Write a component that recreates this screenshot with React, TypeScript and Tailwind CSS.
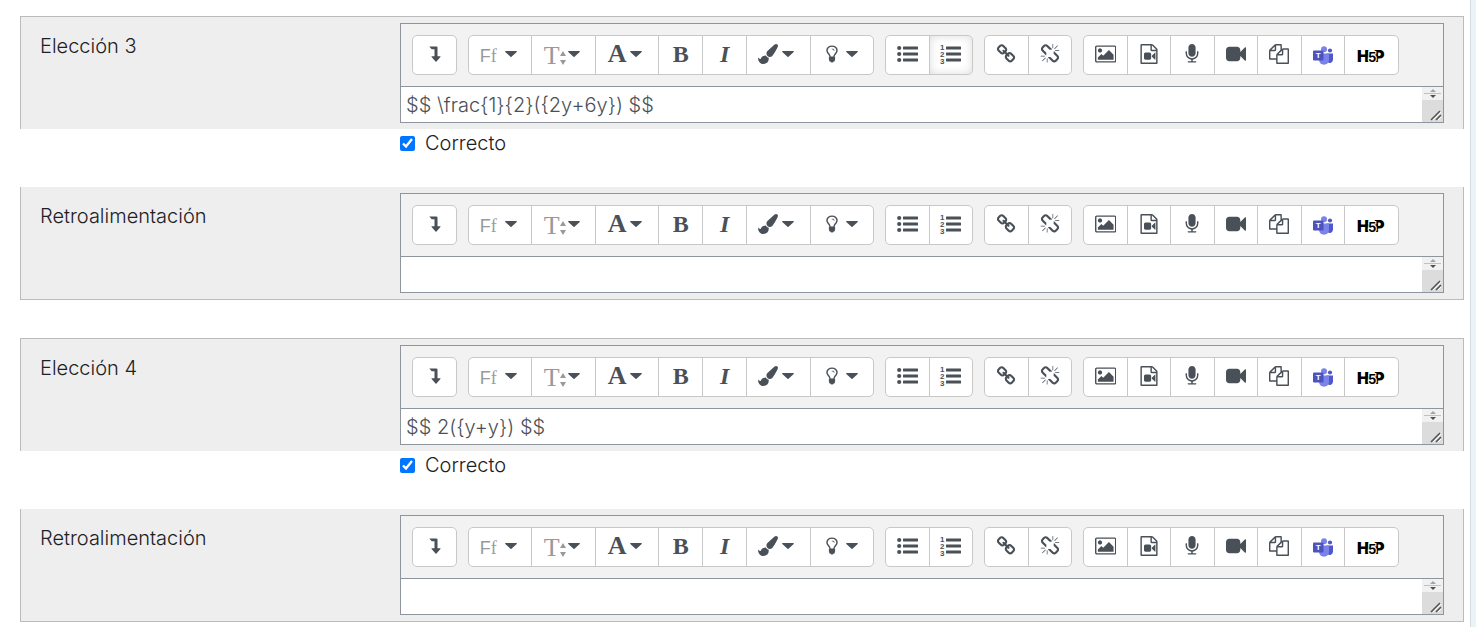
import type { ReactNode } from 'react'

const LINK =
  'M1520 1216q0-40-28-68l-208-208q-28-28-68-28-42 0-72 32 3 3 19 18.5t21.5 21.5 15 19 13 25.5 3.5 27.5q0 40-28 68t-68 28q-15 0-27.5-3.5t-25.5-13-19-15-21.5-21.5-18.5-19q-33 31-33 73 0 40 28 68l206 207q27 27 68 27 40 0 68-26l147-146q28-28 28-67zm-703-705q0-40-28-68l-206-207q-28-28-68-28-39 0-68 27l-147 146q-28 28-28 67 0 40 28 68l208 208q27 27 68 27 42 0 72-31-3-3-19-18.5t-21.5-21.5-15-19-13-25.5-3.5-27.5q0-40 28-68t68-28q15 0 27.5 3.5t25.5 13 19 15 21.5 21.5 18.5 19q33-31 33-73zm895 705q0 120-85 203l-147 146q-83 83-203 83-121 0-204-85l-206-207q-83-83-83-203 0-123 88-209l-88-88q-86 88-208 88-120 0-204-84l-208-208q-84-84-84-204t85-203l147-146q83-83 203-83 121 0 204 85l206 207q83 83 83 203 0 123-88 209l88 88q86-88 208-88 120 0 204 84l208 208q84 84 84 204z'
const UNLINK =
  'M503 1271l-256 256q-10 9-23 9-12 0-23-9-9-10-9-23t9-23l256-256q10-9 23-9t23 9q9 10 9 23t-9 23zm169 41v320q0 14-9 23t-23 9-23-9-9-23v-320q0-14 9-23t23-9 23 9 9 23zm-224-224q0 14-9 23t-23 9h-320q-14 0-23-9t-9-23 9-23 23-9h320q14 0 23 9t9 23zm1264 128q0 120-85 203l-147 146q-83 83-203 83-121 0-204-85l-334-335q-21-21-42-56l239-18 273 274q28 28 68 28t68-27l147-146q28-28 28-67 0-40-28-68l-274-275 18-239q35 21 56 42l336 336q84 86 84 204zm-617-724l-239 18-273-274q-28-28-68-28-39 0-68 27l-147 146q-28 28-28 67 0 40 28 68l274 274-18 240q-35-21-56-42l-336-336q-84-86-84-204 0-120 85-203l147-146q83-83 203-83 121 0 204 85l334 335q21 21 42 56zm633 84q0 14-9 23t-23 9h-320q-14 0-23-9t-9-23 9-23 23-9h320q14 0 23 9t9 23zm-544-544v320q0 14-9 23t-23 9-23-9-9-23v-320q0-14 9-23t23-9 23 9 9 23zm407 151l-256 256q-11 9-23 9t-23-9q-9-10-9-23t9-23l256-256q10-9 23-9t23 9q9 10 9 23t-9 23z'
const PICTURE =
  'M576 576q0 80-56 136t-136 56-136-56-56-136 56-136 136-56 136 56 56 136zm1024 384v448h-1408v-192l320-320 160 160 512-512zm96-704h-1600q-13 0-22.5 9.5t-9.5 22.5v1216q0 13 9.5 22.5t22.5 9.5h1600q13 0 22.5-9.5t9.5-22.5v-1216q0-13-9.5-22.5t-22.5-9.5zm160 32v1216q0 66-47 113t-113 47h-1600q-66 0-113-47t-47-113v-1216q0-66 47-113t113-47h1600q66 0 113 47t47 113z'
const MICROPHONE =
  'M1472 704v128q0 221-147.500 384.500t-364.500 187.500v132h256q26 0 45 19t19 45-19 45-45 19h-640q-26 0-45-19t-19-45 19-45 45-19h256v-132q-217-24-364.500-187.500t-147.500-384.500v-128q0-26 19-45t45-19 45 19 19 45v128q0 185 131.500 316.500t316.500 131.500 316.500-131.500 131.500-316.500v-128q0-26 19-45t45-19 45 19 19 45zm-256-384v512q0 132-94 226t-226 94-226-94-94-226v-512q0-132 94-226t226-94 226 94 94 226z'
const VIDEO =
  'M1792 352v1088q0 42-39 59-13 5-25 5-27 0-45-19l-403-403v166q0 119-84.500 203.500t-203.500 84.500h-704q-119 0-203.500-84.500t-84.500-203.500v-704q0-119 84.500-203.500t203.500-84.500h704q119 0 203.500 84.500t84.500 203.500v165l403-402q18-19 45-19 12 0 25 5 39 17 39 59z'
const FILE_VIDEO =
  'M1596 380q28 28 48 76t20 88v1152q0 40-28 68t-68 28h-1344q-40 0-68-28t-28-68v-1600q0-40 28-68t68-28h896q40 0 88 20t76 48zm-444-244v376h376q-10-29-22-41l-313-313q-12-12-41-22zm384 1528v-1024h-416q-40 0-68-28t-28-68v-416h-768v1536h1280zm-576-896q52 0 90 38t38 90v384q0 52-38 90t-90 38h-384q-52 0-90-38t-38-90v-384q0-52 38-90t90-38h384zm492 2q20 8 20 30v576q0 22-20 30-8 2-12 2-14 0-23-9l-265-266v-90l265-266q9-9 23-9 4 0 12 2z'
const FILES =
  'M1696 384q40 0 68 28t28 68v1216q0 40-28 68t-68 28h-960q-40 0-68-28t-28-68v-288h-544q-40 0-68-28t-28-68v-672q0-40 20-88t48-76l408-408q28-28 76-48t88-20h416q40 0 68 28t28 68v328q68-40 128-40h416zm-544 213l-299 299h299v-299zm-640-384l-299 299h299v-299zm196 647l316-316v-416h-384v416q0 40-28 68t-68 28h-416v640h512v-256q0-40 20-88t48-76zm956 804v-1152h-384v416q0 40-28 68t-68 28h-416v640h896z'
const BULB =
  'M1120 576q0 13-9.500 22.500t-22.500 9.500-22.500-9.500-9.500-22.500q0-46-54-71t-106-25q-13 0-22.500-9.500t-9.500-22.500 9.500-22.500 22.500-9.500q50 0 99.500 16t87 54 37.500 90zm160 0q0-72-34.500-134t-90-101.500-123-62-136.500-22.500-136.500 22.500-123 62-90 101.500-34.500 134q0 101 68 180 10 11 30.500 33t30.500 33q128 153 141 298h228q13-145 141-298 10-11 30.500-33t30.500-33q68-79 68-180zm128 0q0 155-103 268-45 49-74.500 87t-59.500 95.500-34 107.500q47 28 47 82 0 37-25 64 25 27 25 64 0 52-45 81 13 23 13 47 0 46-31.500 71t-77.500 25q-20 44-60 70t-87 26-87-26-60-70q-46 0-77.500-25t-31.500-71q0-24 13-47-45-29-45-81 0-37 25-64-25-27-25-64 0-54 47-82-4-50-34-107.500t-59.500-95.500-74.500-87q-103-113-103-268 0-99 44.500-184.500t117-142 164-89 186.500-32.500 186.500 32.500 164 89 117 142 44.500 184.500z'
const BRUSH =
  'M1615 0q70 0 122.5 46.500t52.500 116.500q0 63-45 151-332 629-465 752-97 91-218 91-126 0-216.500-92.500t-90.500-219.500q0-128 92-212l638-579q59-54 130-54zm-909 1034q39 76 106.500 130t150.500 76l1 71q4 213-129.500 347t-348.500 134q-123 0-218-46.500t-152.500-127.500-86.500-183-29-220q7 5 41 30t62 44.500 59 36.500 46 17q41 0 55-37 25-66 57.500-112.500t69.500-76 88-47.500 103-25.500 125-10.500z'

function Glyph({ d, viewBox = '0 0 1792 1792' }: { d: string; viewBox?: string }) {
  return (
    <svg viewBox={viewBox} className="h-5 shrink-0 fill-current" aria-hidden="true">
      <path d={d} />
    </svg>
  )
}

function Caret() {
  return (
    <svg viewBox="0 0 12 6" className="h-[6px] w-3 shrink-0 fill-current" aria-hidden="true">
      <path d="M.6 0h10.800q.8.200.3.900L6.500 5.700q-.5.400-1 0L.3.900Q-.2.200.6 0z" />
    </svg>
  )
}

function LevelDown() {
  return (
    <svg viewBox="0 0 12 16" className="h-4 w-3 fill-current" aria-hidden="true">
      <path d="M.3.400h7.200q1 0 1 1v8.800h2.600q.8.200.3.900L7.500 15.500q-.5.400-1 0L2.600 11.100q-.5-.8.300-.9h2.600V3.200H2.700z" />
    </svg>
  )
}

function BulletList() {
  return (
    <svg viewBox="0 0 21 18" className="h-[18px] w-[21px] fill-current" aria-hidden="true">
      {[3, 9, 15].map(y => (
        <g key={y}>
          <circle cx="2.200" cy={y} r="2.100" />
          <rect x="6" y={y - 1.400} width="15" height="2.800" rx=".5" />
        </g>
      ))}
    </svg>
  )
}

function NumberList() {
  return (
    <svg viewBox="0 0 21 28" className="h-7 w-[21px] fill-current" aria-hidden="true">
      {[1, 2, 3].map(n => (
        <g key={n}>
          <text x="0" y={n * 7 + 3} className="font-['Liberation_Sans'] text-[8px] font-bold">{n}</text>
          <rect x="6" y={n * 6 + 0.600} width="15" height="2.800" rx=".5" />
        </g>
      ))}
    </svg>
  )
}

function Teams() {
  return (
    <svg viewBox="0 0 20 19" className="mt-[2px] h-[19px] w-5" aria-hidden="true">
      <circle cx="17" cy="4.500" r="2.100" fill="#5059c9" />
      <path d="M13.500 7.500H20v6a3.400 3.400 0 0 1-5 3z" fill="#5059c9" />
      <circle cx="11" cy="3.200" r="3" fill="#7b83eb" />
      <path d="M6 7.500h10v6.200a5 5 0 0 1-10 0z" fill="#7b83eb" />
      <rect y="4.500" width="10.500" height="10" rx="1" fill="#4b53bc" />
      <text x="5.200" y="12.400" textAnchor="middle" fill="#fff" className="font-['Liberation_Sans'] text-[8px] font-bold">T</text>
    </svg>
  )
}

function H5P() {
  return (
    <svg viewBox="0 0 34 28" className="h-7 w-[34px]" aria-hidden="true">
      <g className="font-['Inter'] text-[16px] font-black">
        <text x="2" y="22">H</text>
        <text x="19" y="22">P</text>
        <rect x="11" y="14.500" width="12" height="3" />
        <text x="13" y="22" stroke="#fff" strokeWidth="2" paintOrder="stroke" className="text-[13px] font-bold">5</text>
      </g>
    </svg>
  )
}

function Group({ className = '', children }: { className?: string; children: ReactNode }) {
  return (
    <div className={`flex h-10 shrink-0 divide-x divide-[#c8c8c8] rounded-[5px] border border-[#c8c8c8] bg-white ${className}`}>
      {children}
    </div>
  )
}

interface ToolProps {
  label: string
  className?: string
  pressed?: boolean
  children: ReactNode
}

function Tool({ label, className = 'flex-1', pressed, children }: ToolProps) {
  return (
    <button
      type="button"
      title={label}
      aria-label={label}
      aria-pressed={pressed}
      className={`flex items-center justify-center gap-1 pb-[2px] text-[#495057] ${pressed ? 'rounded-r-[4px] shadow-[inset_0_0_10px_#dcdcdc]' : ''} ${className}`}
    >
      {children}
    </button>
  )
}

function Toolbar({ numbered }: { numbered?: boolean }) {
  return (
    <div className="flex flex-wrap gap-[11px] border-b border-[#8f959e] bg-[#f2f2f2] p-[11px]">
      <Group className="w-[45px]">
        <Tool label="Mostrar más botones"><LevelDown /></Tool>
      </Group>
      <Group className="w-[406px]">
        <Tool label="Familia de fuente" className="flex-1 pr-1">
          <span className="mt-1 mr-1 text-lg leading-5 text-[#999]">
            <span className="font-['Liberation_Sans']">F</span>
            <span className="font-['Liberation_Serif']">f</span>
          </span>
          <Caret />
        </Tool>
        <Tool label="Tamaño de fuente" className="flex-1 pr-1">
          <span className="mt-1 -mr-[2px] flex items-center text-[#999]">
            <span className="font-['Liberation_Serif'] text-[26px] leading-5">T</span>
            <svg viewBox="0 0 6 14" className="mt-1 h-[14px] w-[6px] fill-current" aria-hidden="true">
              <path d="M3 0l3 5H0zM0 9h6l-3 5z" />
            </svg>
          </span>
          <Caret />
        </Tool>
        <Tool label="Color de fuente" className="flex-1 pr-1">
          <span className="font-['Liberation_Serif'] text-[26px] leading-5 font-bold">A</span>
          <Caret />
        </Tool>
        <Tool label="Negrita" className="w-11">
          <span className="font-['Liberation_Serif'] text-2xl leading-5 font-bold">B</span>
        </Tool>
        <Tool label="Cursiva" className="w-11">
          <span className="font-['Liberation_Serif'] text-2xl leading-5 font-bold italic">I</span>
        </Tool>
        <Tool label="Color de fondo" className="flex-1 pr-1"><Glyph d={BRUSH} /><Caret /></Tool>
        <Tool label="Sugerencia" className="flex-1 pr-1"><Glyph d={BULB} /><Caret /></Tool>
      </Group>
      <Group className="w-[88px]">
        <Tool label="Lista no ordenada"><BulletList /></Tool>
        <Tool label="Lista ordenada" pressed={numbered}><NumberList /></Tool>
      </Group>
      <Group className="w-[88px]">
        <Tool label="Enlace"><Glyph d={LINK} /></Tool>
        <Tool label="Desenlazar"><Glyph d={UNLINK} /></Tool>
      </Group>
      <Group className="w-[316px]">
        <Tool label="Insertar imagen"><Glyph d={PICTURE} viewBox="-64 0 1920 1792" /></Tool>
        <Tool label="Insertar multimedia"><Glyph d={FILE_VIDEO} /></Tool>
        <Tool label="Grabar audio"><Glyph d={MICROPHONE} /></Tool>
        <Tool label="Grabar vídeo"><Glyph d={VIDEO} /></Tool>
        <Tool label="Gestionar archivos"><Glyph d={FILES} /></Tool>
        <Tool label="Reunión de Teams"><Teams /></Tool>
        <Tool label="Insertar H5P" className="w-[53px]"><H5P /></Tool>
      </Group>
    </div>
  )
}

interface FieldRowProps {
  id: string
  label: string
  value?: string
  numbered?: boolean
  className: string
}

function FieldRow({ id, label, value = '', numbered, className }: FieldRowProps) {
  return (
    <div className={`flex border-x border-[#bbb] bg-[#eee] px-[19px] py-[6px] ${className}`}>
      <label htmlFor={id} className="w-[360px] shrink-0 pt-[9px] leading-7 text-[#1d2125]">{label}</label>
      <div className="min-w-0 flex-1 border border-[#8f959e]">
        <Toolbar numbered={numbered} />
        <div className="flex h-[35px] bg-white">
          <textarea
            id={id}
            rows={1}
            defaultValue={value}
            className="h-full min-w-0 flex-1 resize-none overflow-hidden px-[5px] pt-1 leading-7 text-[#495057] outline-none"
          />
          <svg viewBox="0 0 21 35" className="h-[35px] w-[21px] shrink-0" aria-hidden="true">
            <rect width="21" height="35" fill="#dcdcdc" />
            <rect width="21" height="13" fill="#f1f1f1" />
            <path d="M8 5l3-3 3 3z" fill="#a3a3a3" />
            <path d="M2 6.500h17" stroke="#c1c1c1" />
            <path d="M8 8h6l-3 3z" fill="#505050" />
            <path d="M9 33l9-9M14 33l5-5" stroke="#505050" strokeWidth="1.500" />
            <path d="M11 33l8-8M16 33l3-3" stroke="#fff" />
          </svg>
        </div>
      </div>
    </div>
  )
}

interface ChoiceProps {
  number: number
  value: string
  numbered?: boolean
}

function Choice({ number, value, numbered }: ChoiceProps) {
  return (
    <section>
      <FieldRow id={`choice-${number}`} label={`Elección ${number}`} value={value} numbered={numbered} className="border-t" />
      <div className="flex h-[58px] items-start pl-[380px]">
        <label className="flex items-center gap-[10px] leading-7 text-[#1d2125]">
          <input type="checkbox" defaultChecked className="size-[15px] accent-[#0075ff]" />
          Correcto
        </label>
      </div>
      <FieldRow id={`feedback-${number}`} label="Retroalimentación" className="border-b" />
    </section>
  )
}

export default function App() {
  return (
    <div className="flex min-h-screen bg-white font-['Inter',sans-serif] text-xl font-light">
      <main className="flex min-w-0 flex-1 flex-col gap-[38px] pt-4 pr-[6px] pb-1 pl-5">
        <Choice number={3} value="$$ \frac{1}{2}({2y+6y}) $$" numbered />
        <Choice number={4} value="$$ 2({y+y}) $$" />
      </main>
      <div className="w-[6px] shrink-0 border-l border-[#d5dde3] bg-[#eaf3f7]" />
    </div>
  )
}
